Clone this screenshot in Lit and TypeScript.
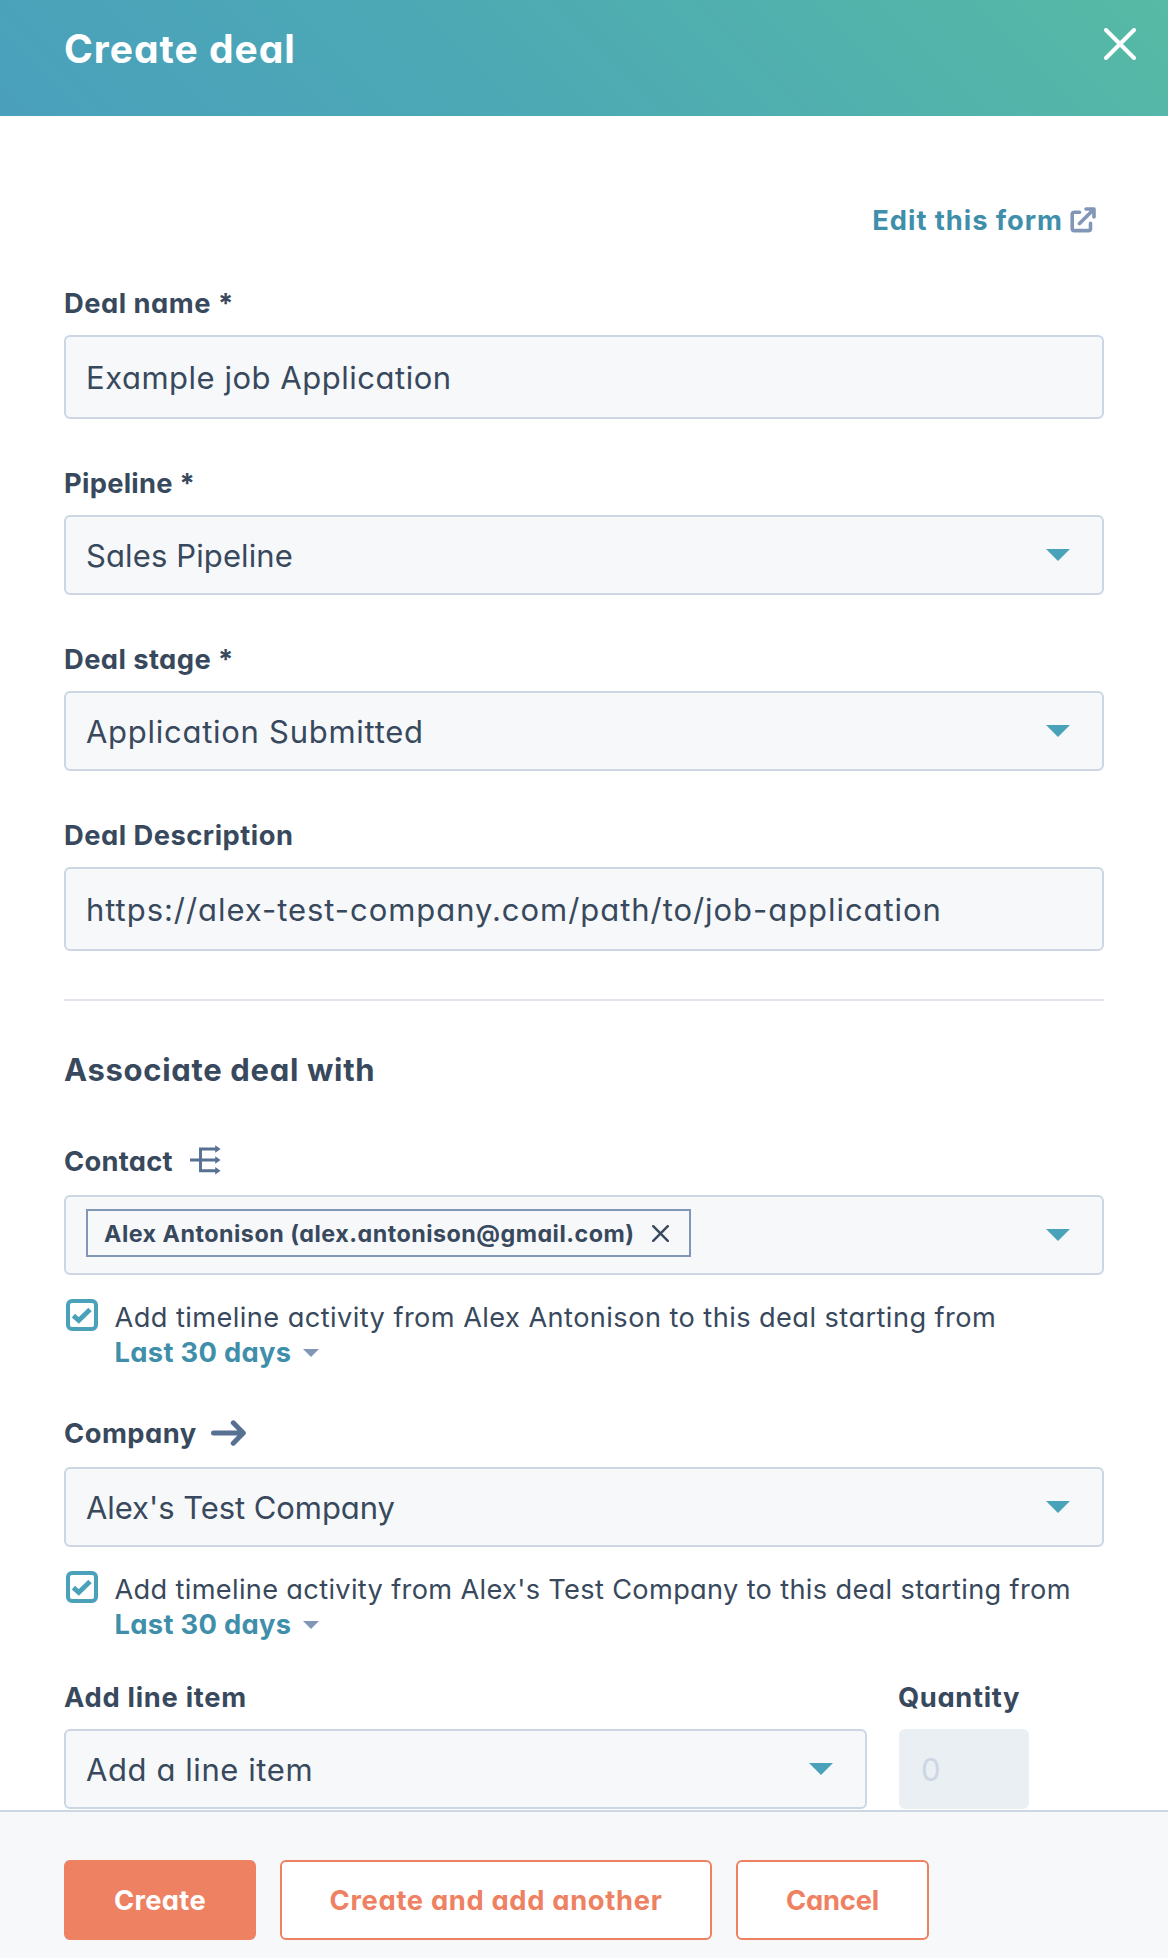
import { LitElement, html, css, svg, nothing, TemplateResult } from "lit";
import { customElement, property } from "lit/decorators.js";
import { styleMap } from "lit/directives/style-map.js";

// Text run with its own tracking, in pixels.
const run = (text: string, tracking = 0) =>
  html`<span class="run" style=${styleMap({ letterSpacing: `${tracking}px` })}>${text}</span>`;

const caret = (w: number, h: number, cls: string) => html`
  <svg class=${cls} width=${w} height=${h} viewBox="0 0 ${w} ${h}">
    ${svg`<path d="M0 0H${w}L${w / 2} ${h}Z" fill="currentColor" />`}
  </svg>`;

const branchIcon = html`
  <svg class="branch" width="31" height="30" viewBox="0 0 31 30">
    <path d="M27 4H10.5V25.7H27M0 15H27" fill="none" stroke="currentColor" stroke-width="2.9" />
    <path d="M25.2 0.3L30.6 4L25.2 7.7ZM25.2 11.3L30.6 15L25.2 18.7ZM25.2 22L30.6 25.7L25.2 29.4Z" fill="currentColor" />
  </svg>`;

const arrowIcon = html`
  <svg class="arrow" width="36" height="26" viewBox="0 0 36 26">
    <path d="M2.5 13H32M22.3 2.8L32.3 13L22.3 23.2" fill="none" stroke="currentColor"
      stroke-width="5" stroke-linecap="round" stroke-linejoin="round" />
  </svg>`;

@customElement("deal-field")
class DealField extends LitElement {
  @property({ type: Boolean }) select = false;
  @property({ type: Boolean }) tall = false;

  static styles = css`
    :host { display: block; }
    .box {
      box-sizing: border-box;
      display: flex;
      align-items: center;
      justify-content: space-between;
      height: 80px;
      padding: 0 32px 0 20px;
      border: 2px solid #cdd6e3;
      border-radius: 6px;
      background: #f6f8fa;
      font-size: 31px;
      font-weight: 400;
      line-height: 40px;
    }
    .tall { height: 84px; }
    .value { padding-top: 1px; white-space: nowrap; }
    .caret { display: block; color: #4aa2ba; }
  `;

  render() {
    return html`<div class="box ${this.tall ? "tall" : ""}">
      <div class="value"><slot></slot></div>
      ${this.select ? caret(24, 12, "caret") : nothing}
    </div>`;
  }
}

@customElement("timeline-option")
class TimelineOption extends LitElement {
  @property() text = "";
  @property({ type: Number }) tracking = 0;

  static styles = css`
    :host { display: flex; gap: 16.5px; padding-left: 2px; }
    .check { flex: none; display: block; }
    .copy { padding-top: 1px; font-size: 27.2px; font-weight: 400; line-height: 35px; white-space: nowrap; }
    .range { display: flex; align-items: center; color: #3f8fab; font-size: 27.3px; font-weight: 700; }
    .down { margin: 0 0 0 12px; color: #8297b8; }
  `;

  render() {
    return html`
      <svg class="check" width="32" height="32" viewBox="0 0 32 32">
        <rect x="2" y="2" width="28" height="28" rx="4" fill="#fff" stroke="#4aa2ba" stroke-width="4" />
        <path d="M7.4 16.6L12.8 21.4L24 10.6" fill="none" stroke="#4aa2ba" stroke-width="4.8" />
      </svg>
      <div class="copy">
        <div>${run(this.text, this.tracking)}</div>
        <div class="range">${run("Last 30 days", 0.33)}${caret(16, 8, "down")}</div>
      </div>`;
  }
}

@customElement("app-root")
class AppRoot extends LitElement {
  static styles = css`
    :host {
      display: flex;
      flex-direction: column;
      height: 1958px;
      overflow: hidden;
      background: #fff;
      color: #38495d;
      font-family: Inter, "Open Sans", sans-serif;
      font-feature-settings: "cv11";
    }
    .header {
      box-sizing: border-box;
      flex: none;
      display: flex;
      justify-content: space-between;
      align-items: flex-start;
      height: 116px;
      padding: 25px 32px 0 64px;
      background: linear-gradient(45deg, #4aa0bc 0%, #4ca8b5 38%, #56baa5 100%);
      color: #fff;
    }
    .title { margin: 0; font-size: 39px; font-weight: 700; line-height: 48px; }
    .close { display: block; margin-top: 3px; }
    .body { flex: none; box-sizing: border-box; height: 1694px; padding: 87px 64px 0; }
    .edit {
      display: flex;
      justify-content: flex-end;
      align-items: center;
      gap: 7px;
      height: 34px;
      padding-right: 8px;
      margin-bottom: 49px;
      color: #3f8fab;
      font-size: 27.3px;
      font-weight: 700;
      line-height: 34px;
    }
    .edit .run, .label .run { padding-top: 2px; }
    .external { display: block; color: #8297b8; }
    .label {
      display: flex;
      align-items: center;
      height: 34px;
      margin: 0 0 15px 0;
      font-size: 27.3px;
      font-weight: 700;
      line-height: 34px;
      white-space: nowrap;
    }
    .linked { margin-bottom: 17px; }
    .branch { margin: -2px 0 0 17px; color: #587193; }
    .arrow { margin-left: 14px; color: #587193; }
    .field { margin-bottom: 47px; }
    .rule { height: 2px; margin: 48px 0 49px; background: #dfe4ea; }
    .section { margin: 0 0 54px; font-size: 31px; font-weight: 700; line-height: 40px; }
    .chip {
      box-sizing: border-box;
      display: flex;
      align-items: center;
      justify-content: space-between;
      width: 605px;
      height: 48px;
      margin-bottom: 5px;
      padding: 0 20px 0 16px;
      border: 2px solid #8197b8;
      font-size: 23.3px;
      font-weight: 700;
      line-height: 32px;
    }
    .chip .run { padding-top: 1px; }
    .option { margin: 24px 0 46px; }
    .last { margin-bottom: 38px; }
    .items { display: grid; grid-template-columns: 803px 130px; gap: 32px; }
    .qty { margin-left: -1px; }
    .count {
      box-sizing: border-box;
      height: 80px;
      padding: 21px 22px;
      border-radius: 6px;
      background: #eaeff4;
      color: #cdd6e3;
      font-size: 31px;
      font-weight: 400;
      line-height: 40px;
    }
    .footer {
      flex: 1;
      box-sizing: border-box;
      display: flex;
      align-items: flex-start;
      gap: 24px;
      padding: 48px 64px 0;
      border-top: 2px solid #cdd6e3;
      background: #f6f8fa;
    }
    .btn {
      box-sizing: border-box;
      width: 193px;
      height: 80px;
      margin: 0;
      padding: 2px 0 0;
      border: 2px solid #ee8162;
      border-radius: 6px;
      background: #fff;
      color: #ee8162;
      font: inherit;
      font-feature-settings: inherit;
      font-size: 27.3px;
      font-weight: 700;
      line-height: 34px;
    }
    .primary { width: 192px; background: #ee8162; color: #fff; }
    .wide { width: 432px; }
  `;

  private label(text: string, tracking: number, icon?: TemplateResult) {
    return html`<div class="label ${icon ? "linked" : ""}">${run(text, tracking)}${icon ?? nothing}</div>`;
  }

  render() {
    return html`
      <header class="header">
        <h1 class="title">${run("Create deal", 1)}</h1>
        <svg class="close" width="32" height="32" viewBox="0 0 32 32">
          <path d="M2 2L30 30M30 2L2 30" stroke="#fff" stroke-width="4" stroke-linecap="round" />
        </svg>
      </header>

      <main class="body">
        <div class="edit">
          ${run("Edit this form", 0.97)}
          <svg class="external" width="26" height="26" viewBox="0 0 26 26" fill="none"
            stroke="currentColor" stroke-width="3.6" stroke-linecap="round" stroke-linejoin="round">
            <path d="M9.6 5.3H4.4Q2.2 5.3 2.2 7.5V21.4Q2.2 23.6 4.4 23.6H18.3Q20.5 23.6 20.5 21.4V16.4" />
            <path d="M9.5 16.5L23.6 2.4M16 2H24V10" />
          </svg>
        </div>

        ${this.label("Deal name *", 0.5)}
        <deal-field class="field" tall>${run("Example job Application", 0.52)}</deal-field>
        ${this.label("Pipeline *", 0.28)}
        <deal-field class="field" select>${run("Sales Pipeline", 0.12)}</deal-field>
        ${this.label("Deal stage *", 0.43)}
        <deal-field class="field" select>${run("Application Submitted", 0.73)}</deal-field>
        ${this.label("Deal Description", 0.5)}
        <deal-field tall>${run("https://alex-test-company.com/path/to/job-application", 0.95)}</deal-field>

        <div class="rule"></div>
        <h2 class="section">${run("Associate deal with", 0.68)}</h2>

        ${this.label("Contact", 0.27, branchIcon)}
        <deal-field select>
          <div class="chip">
            ${run("Alex Antonison (alex.antonison@gmail.com)", 0.49)}
            <svg width="17" height="17" viewBox="0 0 17 17">
              <path d="M1.2 1.2L15.8 15.8M15.8 1.2L1.2 15.8" stroke="currentColor" stroke-width="2.4" stroke-linecap="round" />
            </svg>
          </div>
        </deal-field>
        <timeline-option class="option" .tracking=${0.43}
          text="Add timeline activity from Alex Antonison to this deal starting from"></timeline-option>

        ${this.label("Company", 0.48, arrowIcon)}
        <deal-field select>${run("Alex's Test Company", -0.06)}</deal-field>
        <timeline-option class="option last" .tracking=${0.33}
          text="Add timeline activity from Alex's Test Company to this deal starting from"></timeline-option>

        <div class="items">
          <div>
            ${this.label("Add line item", 0.72)}
            <deal-field select>${run("Add a line item", 0.58)}</deal-field>
          </div>
          <div>
            <div class="qty">${this.label("Quantity", 0.65)}</div>
            <div class="count">0</div>
          </div>
        </div>
      </main>

      <footer class="footer">
        <button class="btn primary">${run("Create", 0.3)}</button>
        <button class="btn wide">${run("Create and add another", 0.68)}</button>
        <button class="btn">${run("Cancel", -0.15)}</button>
      </footer>
    `;
  }
}
